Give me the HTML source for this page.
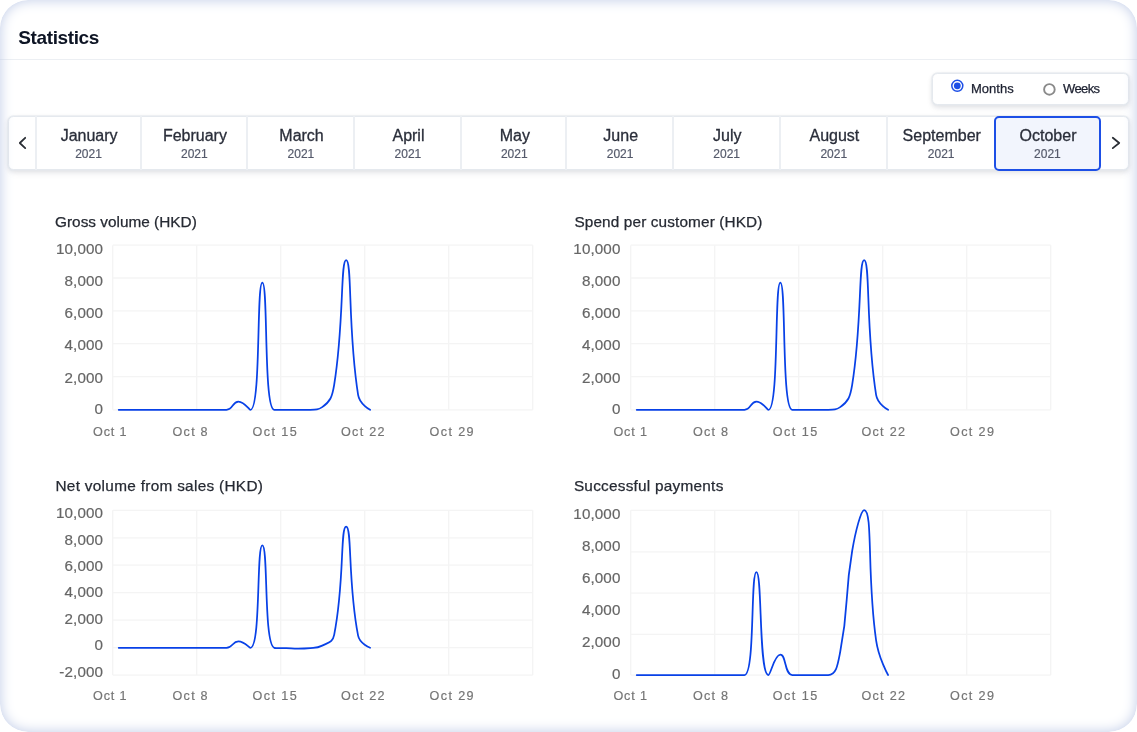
<!DOCTYPE html>
<html lang="en"><head><meta charset="utf-8"><title>Statistics</title>
<style>
html,body{margin:0;padding:0;background:#fff;}
body{width:1137px;height:732px;overflow:hidden;position:relative;font-family:"Liberation Sans",sans-serif;}
#card{position:absolute;left:0;top:0;width:1137px;height:732px;border-radius:28px;background:#fff;overflow:hidden;will-change:transform;}
#glow{position:absolute;left:0;top:0;width:1137px;height:732px;border-radius:28px;box-shadow:inset 0 0 13px #bfcbe7;pointer-events:none;}
#clip{position:absolute;left:0;top:60px;width:1132.5px;height:130px;overflow:hidden;}
h1{position:absolute;left:18.3px;top:26px;margin:0;font-size:19px;line-height:24px;font-weight:700;color:#0d1424;letter-spacing:-.38px;white-space:nowrap;}
#hr{position:absolute;left:0;top:59px;width:1137px;height:1px;background:#eceff3;}
#rg{position:absolute;left:932px;top:13px;width:195px;height:30px;border:1px solid #e5e9ee;border-radius:5.5px;background:#fff;box-shadow:0 0 0 .8px rgba(229,233,238,.75),0 2px 4px rgba(30,40,60,.10),1px 3px 8px rgba(30,40,60,.06);}
#rg span{position:absolute;font-size:13px;line-height:16px;color:#1c2030;white-space:nowrap;-webkit-text-stroke:.25px #1c2030;}
#bar{position:absolute;left:8px;top:56px;width:1119px;height:52px;border:1px solid #e5e9ee;border-radius:5.5px;background:#fff;box-shadow:0 0 0 .8px rgba(229,233,238,.75),0 2px 4px rgba(30,40,60,.10),1px 3px 8px rgba(30,40,60,.06);}
.cell{position:absolute;top:56px;height:54px;box-sizing:border-box;text-align:center;border-left:2px solid #eceff3;padding-left:1px;}
.cell.sel{border:2px solid #1d4fe6;border-radius:5px;background:#f2f5fd;top:56px;height:55px;padding:0;}
.cell>div{position:relative;white-space:nowrap;}
.mn{margin-top:9.5px;font-size:16px;line-height:20px;color:#2a2e3a;-webkit-text-stroke:.3px #2a2e3a;padding-left:1.2px;}
.yr{margin-top:1px;font-size:12px;line-height:14px;color:#555a6b;-webkit-text-stroke:.2px #555a6b;}
.sel .mn{margin-top:7.5px}
.nav{position:absolute;left:0;top:60px;}
svg text{font-family:"Liberation Sans",sans-serif;}
.ct{font-size:15.35px;fill:#262a33;stroke:#262a33;stroke-width:.25px;}
.yl{font-size:15.2px;fill:#666;stroke:#666;stroke-width:.2px;letter-spacing:.12px;}
.xl{font-size:12.6px;fill:#757575;stroke:#757575;stroke-width:.2px;}
</style></head><body>
<div id="card">
<h1>Statistics</h1>
<div id="hr"></div>
<div id="clip">
<div id="rg">
  <svg style="position:absolute;left:0;top:0" width="195" height="30" viewBox="0 0 195 30"><circle cx="24.3" cy="11.8" r="5.5" fill="#fff" stroke="#1d4fe6" stroke-width="1.5"/><circle cx="24.3" cy="11.8" r="3.4" fill="#1d4fe6"/><circle cx="116.4" cy="15.4" r="5.3" fill="#fff" stroke="#8a8a8a" stroke-width="1.9"/></svg>
  <span style="left:38px;top:7px">Months</span>
  <span style="left:130px;top:7px;letter-spacing:-.6px">Weeks</span>
</div>
<div id="bar"></div>
<div class="cell" style="left:34.5px;width:105.0px"><div class="mn">January</div><div class="yr">2021</div></div><div class="cell" style="left:139.5px;width:106.7px"><div class="mn">February</div><div class="yr">2021</div></div><div class="cell" style="left:246.2px;width:106.5px"><div class="mn">March</div><div class="yr">2021</div></div><div class="cell" style="left:352.7px;width:107.4px"><div class="mn">April</div><div class="yr">2021</div></div><div class="cell" style="left:460.1px;width:105.3px"><div class="mn">May</div><div class="yr">2021</div></div><div class="cell" style="left:565.4px;width:106.4px"><div class="mn">June</div><div class="yr">2021</div></div><div class="cell" style="left:671.8px;width:106.8px"><div class="mn">July</div><div class="yr">2021</div></div><div class="cell" style="left:778.6px;width:107.4px"><div class="mn">August</div><div class="yr">2021</div></div><div class="cell" style="left:886.0px;width:107.3px"><div class="mn">September</div><div class="yr">2021</div></div><div class="cell sel" style="left:994.3px;width:106.3px"><div class="mn">October</div><div class="yr">2021</div></div>
</div>
<svg class="nav" width="1137" height="130" viewBox="0 60 1137 130"><g fill="none" stroke="#2a2e35" stroke-width="1.8" stroke-linecap="round" stroke-linejoin="round"><path d="M25.2 137.8 L19.8 143 L25.2 148.1"/><path d="M1112.8 137.8 L1119.2 143 L1112.8 148.1"/></g></svg>
<svg id="charts" style="position:absolute;left:0;top:0" width="1137" height="732" viewBox="0 0 1137 732">
<g stroke="#f4f4f4" stroke-width="1.3" fill="none"><line x1="112.7" y1="245.2" x2="532.7" y2="245.2"/><line x1="112.7" y1="278.0" x2="532.7" y2="278.0"/><line x1="112.7" y1="310.8" x2="532.7" y2="310.8"/><line x1="112.7" y1="343.7" x2="532.7" y2="343.7"/><line x1="112.7" y1="376.6" x2="532.7" y2="376.6"/><line x1="112.7" y1="409.8" x2="532.7" y2="409.8"/><line x1="112.7" y1="245.2" x2="112.7" y2="409.8"/><line x1="196.7" y1="245.2" x2="196.7" y2="409.8"/><line x1="280.7" y1="245.2" x2="280.7" y2="409.8"/><line x1="364.7" y1="245.2" x2="364.7" y2="409.8"/><line x1="448.7" y1="245.2" x2="448.7" y2="409.8"/><line x1="532.7" y1="245.2" x2="532.7" y2="409.8"/></g><text x="55.0" y="227" textLength="141.8" class="ct">Gross volume (HKD)</text><text x="103.1" y="253.8" text-anchor="end" class="yl">10,000</text><text x="103.1" y="285.9" text-anchor="end" class="yl">8,000</text><text x="103.1" y="317.8" text-anchor="end" class="yl">6,000</text><text x="103.1" y="349.9" text-anchor="end" class="yl">4,000</text><text x="103.1" y="382.6" text-anchor="end" class="yl">2,000</text><text x="103.1" y="414.2" text-anchor="end" class="yl">0</text><text x="93.0" y="436" textLength="33.6" class="xl">Oct 1</text><text x="172.6" y="436" textLength="35.0" class="xl">Oct 8</text><text x="252.4" y="436" textLength="44.4" class="xl">Oct 15</text><text x="341.0" y="436" textLength="43.6" class="xl">Oct 22</text><text x="429.6" y="436" textLength="44.0" class="xl">Oct 29</text><path d="M118.70,409.80C118.70,409.80 124.69,409.80 130.67,409.80C136.66,409.80 136.66,409.80 142.64,409.80C148.62,409.80 148.62,409.80 154.61,409.80C160.60,409.80 160.60,409.80 166.58,409.80C172.56,409.80 172.56,409.80 178.55,409.80C184.54,409.80 184.54,409.80 190.52,409.80C196.50,409.80 196.50,409.80 202.49,409.80C208.48,409.80 208.48,409.80 214.46,409.80C220.44,409.80 221.02,409.80 226.43,409.80C232.99,409.80 232.42,401.60 238.40,401.60C244.38,401.60 249.15,409.80 250.37,409.80C261.12,409.80 256.36,282.60 262.34,282.60C268.33,282.60 263.37,409.80 274.31,409.80C275.34,409.80 280.30,409.80 286.28,409.80C292.26,409.80 292.26,409.80 298.25,409.80C304.24,409.80 304.31,409.80 310.22,409.80C316.28,409.80 318.28,409.80 322.19,407.10C330.25,401.53 332.15,397.15 334.16,384.80C344.12,323.70 340.37,260.20 346.13,260.20C352.34,260.20 347.62,329.30 358.10,394.80C359.59,404.10 370.07,409.80 370.07,409.80" fill="none" stroke="#0841e7" stroke-width="1.75" stroke-linejoin="round" stroke-linecap="round"/><g stroke="#f4f4f4" stroke-width="1.3" fill="none"><line x1="630.7" y1="245.2" x2="1050.7" y2="245.2"/><line x1="630.7" y1="278.0" x2="1050.7" y2="278.0"/><line x1="630.7" y1="310.8" x2="1050.7" y2="310.8"/><line x1="630.7" y1="343.7" x2="1050.7" y2="343.7"/><line x1="630.7" y1="376.6" x2="1050.7" y2="376.6"/><line x1="630.7" y1="409.8" x2="1050.7" y2="409.8"/><line x1="630.7" y1="245.2" x2="630.7" y2="409.8"/><line x1="714.7" y1="245.2" x2="714.7" y2="409.8"/><line x1="798.7" y1="245.2" x2="798.7" y2="409.8"/><line x1="882.7" y1="245.2" x2="882.7" y2="409.8"/><line x1="966.7" y1="245.2" x2="966.7" y2="409.8"/><line x1="1050.7" y1="245.2" x2="1050.7" y2="409.8"/></g><text x="574.4" y="227" textLength="188.0" class="ct">Spend per customer (HKD)</text><text x="620.5" y="253.8" text-anchor="end" class="yl">10,000</text><text x="620.5" y="285.9" text-anchor="end" class="yl">8,000</text><text x="620.5" y="317.8" text-anchor="end" class="yl">6,000</text><text x="620.5" y="349.9" text-anchor="end" class="yl">4,000</text><text x="620.5" y="382.6" text-anchor="end" class="yl">2,000</text><text x="620.5" y="414.2" text-anchor="end" class="yl">0</text><text x="613.4" y="436" textLength="33.6" class="xl">Oct 1</text><text x="693.0" y="436" textLength="35.0" class="xl">Oct 8</text><text x="772.8" y="436" textLength="44.4" class="xl">Oct 15</text><text x="861.4" y="436" textLength="43.6" class="xl">Oct 22</text><text x="950.0" y="436" textLength="44.0" class="xl">Oct 29</text><path d="M636.70,409.80C636.70,409.80 642.69,409.80 648.67,409.80C654.66,409.80 654.66,409.80 660.64,409.80C666.62,409.80 666.62,409.80 672.61,409.80C678.60,409.80 678.60,409.80 684.58,409.80C690.57,409.80 690.57,409.80 696.55,409.80C702.54,409.80 702.54,409.80 708.52,409.80C714.51,409.80 714.51,409.80 720.49,409.80C726.47,409.80 726.48,409.80 732.46,409.80C738.45,409.80 739.02,409.80 744.43,409.80C750.99,409.80 750.42,401.60 756.40,401.60C762.39,401.60 767.15,409.80 768.37,409.80C779.12,409.80 774.36,282.60 780.34,282.60C786.33,282.60 781.37,409.80 792.31,409.80C793.34,409.80 798.30,409.80 804.28,409.80C810.27,409.80 810.27,409.80 816.25,409.80C822.23,409.80 822.31,409.80 828.22,409.80C834.28,409.80 836.28,409.80 840.19,407.10C848.25,401.53 850.15,397.15 852.16,384.80C862.12,323.70 858.37,260.20 864.13,260.20C870.34,260.20 865.62,329.30 876.10,394.80C877.59,404.10 888.07,409.80 888.07,409.80" fill="none" stroke="#0841e7" stroke-width="1.75" stroke-linejoin="round" stroke-linecap="round"/><g stroke="#f4f4f4" stroke-width="1.3" fill="none"><line x1="112.7" y1="510.3" x2="532.7" y2="510.3"/><line x1="112.7" y1="537.8" x2="532.7" y2="537.8"/><line x1="112.7" y1="565.2" x2="532.7" y2="565.2"/><line x1="112.7" y1="592.7" x2="532.7" y2="592.7"/><line x1="112.7" y1="620.2" x2="532.7" y2="620.2"/><line x1="112.7" y1="647.6" x2="532.7" y2="647.6"/><line x1="112.7" y1="675.1" x2="532.7" y2="675.1"/><line x1="112.7" y1="510.3" x2="112.7" y2="675.1"/><line x1="196.7" y1="510.3" x2="196.7" y2="675.1"/><line x1="280.7" y1="510.3" x2="280.7" y2="675.1"/><line x1="364.7" y1="510.3" x2="364.7" y2="675.1"/><line x1="448.7" y1="510.3" x2="448.7" y2="675.1"/><line x1="532.7" y1="510.3" x2="532.7" y2="675.1"/></g><text x="55.4" y="490.6" textLength="207.5" class="ct">Net volume from sales (HKD)</text><text x="103.1" y="518.2" text-anchor="end" class="yl">10,000</text><text x="103.1" y="544.9" text-anchor="end" class="yl">8,000</text><text x="103.1" y="570.8" text-anchor="end" class="yl">6,000</text><text x="103.1" y="597.1" text-anchor="end" class="yl">4,000</text><text x="103.1" y="623.7" text-anchor="end" class="yl">2,000</text><text x="103.1" y="649.6" text-anchor="end" class="yl">0</text><text x="103.1" y="676.7" text-anchor="end" class="yl">-2,000</text><text x="93.0" y="700.2" textLength="33.6" class="xl">Oct 1</text><text x="172.6" y="700.2" textLength="35.0" class="xl">Oct 8</text><text x="252.4" y="700.2" textLength="44.4" class="xl">Oct 15</text><text x="341.0" y="700.2" textLength="43.6" class="xl">Oct 22</text><text x="429.6" y="700.2" textLength="44.0" class="xl">Oct 29</text><path d="M118.70,647.80C118.70,647.80 124.69,647.80 130.67,647.80C136.66,647.80 136.66,647.80 142.64,647.80C148.62,647.80 148.62,647.80 154.61,647.80C160.60,647.80 160.60,647.80 166.58,647.80C172.56,647.80 172.56,647.80 178.55,647.80C184.54,647.80 184.54,647.80 190.52,647.80C196.50,647.80 196.50,647.80 202.49,647.80C208.48,647.80 208.48,647.80 214.46,647.80C220.44,647.80 220.83,647.80 226.43,647.80C232.80,647.80 232.42,641.30 238.40,641.30C244.38,641.30 248.97,647.80 250.37,647.80C260.94,647.80 256.36,545.40 262.34,545.40C268.33,545.40 263.59,644.36 274.31,647.80C275.56,648.20 280.30,647.98 286.28,648.20C292.27,648.43 292.26,648.70 298.25,648.70C304.24,648.70 304.30,648.70 310.22,648.20C316.27,647.69 317.02,648.20 322.19,645.60C328.99,642.18 332.62,642.48 334.16,634.80C344.59,582.93 340.17,526.50 346.13,526.50C352.14,526.50 347.74,583.19 358.10,635.70C359.71,643.84 370.07,647.80 370.07,647.80" fill="none" stroke="#0841e7" stroke-width="1.75" stroke-linejoin="round" stroke-linecap="round"/><g stroke="#f4f4f4" stroke-width="1.3" fill="none"><line x1="630.7" y1="510.3" x2="1050.7" y2="510.3"/><line x1="630.7" y1="551.9" x2="1050.7" y2="551.9"/><line x1="630.7" y1="593.1" x2="1050.7" y2="593.1"/><line x1="630.7" y1="634.3" x2="1050.7" y2="634.3"/><line x1="630.7" y1="675.1" x2="1050.7" y2="675.1"/><line x1="630.7" y1="510.3" x2="630.7" y2="675.1"/><line x1="714.7" y1="510.3" x2="714.7" y2="675.1"/><line x1="798.7" y1="510.3" x2="798.7" y2="675.1"/><line x1="882.7" y1="510.3" x2="882.7" y2="675.1"/><line x1="966.7" y1="510.3" x2="966.7" y2="675.1"/><line x1="1050.7" y1="510.3" x2="1050.7" y2="675.1"/></g><text x="573.9" y="490.6" textLength="149.4" class="ct">Successful payments</text><text x="620.5" y="519.3" text-anchor="end" class="yl">10,000</text><text x="620.5" y="551.4" text-anchor="end" class="yl">8,000</text><text x="620.5" y="583.4" text-anchor="end" class="yl">6,000</text><text x="620.5" y="615.2" text-anchor="end" class="yl">4,000</text><text x="620.5" y="647.3" text-anchor="end" class="yl">2,000</text><text x="620.5" y="679.0" text-anchor="end" class="yl">0</text><text x="613.4" y="700.2" textLength="33.6" class="xl">Oct 1</text><text x="693.0" y="700.2" textLength="35.0" class="xl">Oct 8</text><text x="772.8" y="700.2" textLength="44.4" class="xl">Oct 15</text><text x="861.4" y="700.2" textLength="43.6" class="xl">Oct 22</text><text x="950.0" y="700.2" textLength="44.0" class="xl">Oct 29</text><path d="M636.70,675.00C636.70,675.00 642.69,675.00 648.67,675.00C654.66,675.00 654.66,675.00 660.64,675.00C666.62,675.00 666.62,675.00 672.61,675.00C678.60,675.00 678.60,675.00 684.58,675.00C690.57,675.00 690.57,675.00 696.55,675.00C702.54,675.00 702.54,675.00 708.52,675.00C714.51,675.00 714.51,675.00 720.49,675.00C726.47,675.00 726.48,675.00 732.46,675.00C738.45,675.00 743.19,675.00 744.43,675.00C755.16,675.00 750.42,572.00 756.40,572.00C762.39,572.00 758.62,675.00 768.37,675.00C770.59,675.00 774.36,654.70 780.34,654.70C786.33,654.70 784.37,675.00 792.31,675.00C796.34,675.00 798.30,675.00 804.28,675.00C810.27,675.00 810.27,675.00 816.25,675.00C822.23,675.00 824.44,675.00 828.22,675.00C836.41,675.00 837.76,664.59 840.19,652.00C849.73,602.59 843.73,601.00 852.16,551.00C855.70,530.00 861.18,510.00 864.13,510.00C873.15,510.00 866.75,575.87 876.10,640.30C878.72,658.37 888.07,675.00 888.07,675.00" fill="none" stroke="#0841e7" stroke-width="1.75" stroke-linejoin="round" stroke-linecap="round"/>
</svg>
<div id="glow"></div>
</div>
</body></html>
